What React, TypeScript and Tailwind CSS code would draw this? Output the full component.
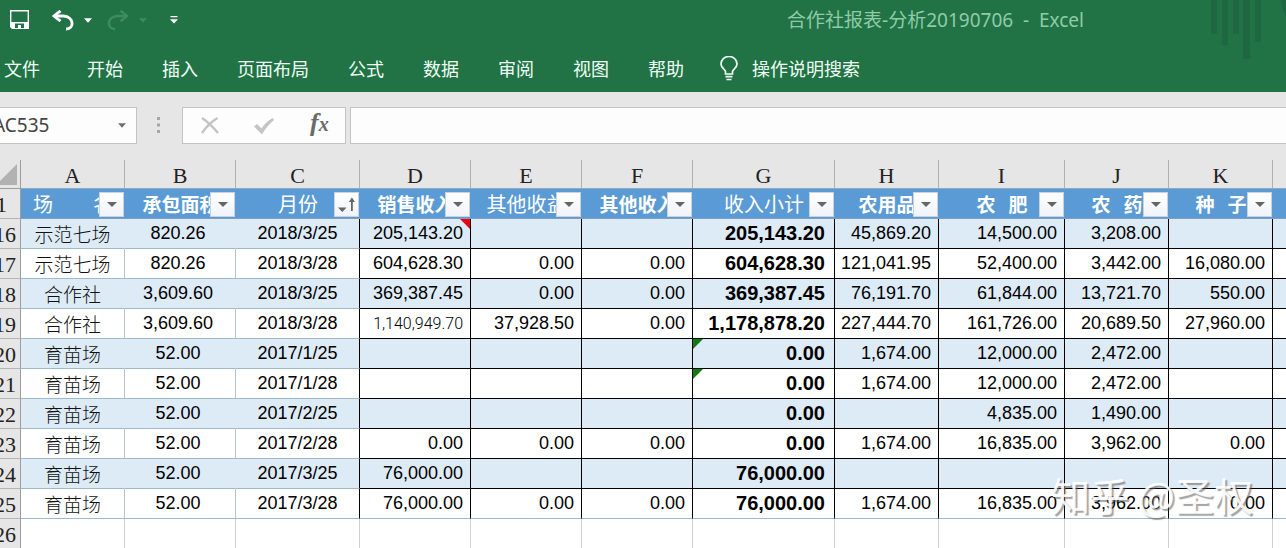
/**
 * App.tsx
 *
 * Excel window: title bar, ribbon tabs, formula bar and the cooperative report sheet.
 */

import React from 'react'
import clsx from 'clsx'

type Filter = 'caret' | 'sorted'

interface Column {
    letter: string
    title: string
    width: string
    bold?: boolean
    filter?: Filter
}

interface Row {
    no: string
    cells: string[]
}

const TABS = ['开始', '插入', '页面布局', '公式', '数据', '审阅', '视图', '帮助']

const COLUMNS: Column[] = [
    { letter: 'A', title: '场　　名', width: 'w-[104px]' },
    { letter: 'B', title: '承包面积', width: 'w-[111px]', bold: true },
    { letter: 'C', title: '月份', width: 'w-[124px]', filter: 'sorted' },
    { letter: 'D', title: '销售收入', width: 'w-[111px]', bold: true },
    { letter: 'E', title: '其他收益', width: 'w-[111px]' },
    { letter: 'F', title: '其他收入', width: 'w-[111px]', bold: true },
    { letter: 'G', title: '收入小计', width: 'w-[142px]' },
    { letter: 'H', title: '农用品', width: 'w-[104px]', bold: true },
    { letter: 'I', title: '农   肥', width: 'w-[126px]', bold: true },
    { letter: 'J', title: '农   药', width: 'w-[104px]', bold: true },
    { letter: 'K', title: '种   子', width: 'w-[104px]', bold: true },
]

const ROWS: Row[] = [
    { no: '16', cells: ['示范七场', '820.26', '2018/3/25', '205,143.20', '', '', '205,143.20', '45,869.20', '14,500.00', '3,208.00', ''] },
    { no: '17', cells: ['示范七场', '820.26', '2018/3/28', '604,628.30', '0.00', '0.00', '604,628.30', '121,041.95', '52,400.00', '3,442.00', '16,080.00'] },
    { no: '18', cells: ['合作社', '3,609.60', '2018/3/25', '369,387.45', '0.00', '0.00', '369,387.45', '76,191.70', '61,844.00', '13,721.70', '550.00'] },
    { no: '19', cells: ['合作社', '3,609.60', '2018/3/28', '1,140,949.70', '37,928.50', '0.00', '1,178,878.20', '227,444.70', '161,726.00', '20,689.50', '27,960.00'] },
    { no: '20', cells: ['育苗场', '52.00', '2017/1/25', '', '', '', '0.00', '1,674.00', '12,000.00', '2,472.00', ''] },
    { no: '21', cells: ['育苗场', '52.00', '2017/1/28', '', '', '', '0.00', '1,674.00', '12,000.00', '2,472.00', ''] },
    { no: '22', cells: ['育苗场', '52.00', '2017/2/25', '', '', '', '0.00', '', '4,835.00', '1,490.00', ''] },
    { no: '23', cells: ['育苗场', '52.00', '2017/2/28', '0.00', '0.00', '0.00', '0.00', '1,674.00', '16,835.00', '3,962.00', '0.00'] },
    { no: '24', cells: ['育苗场', '52.00', '2017/3/25', '76,000.00', '', '', '76,000.00', '', '', '', ''] },
    { no: '25', cells: ['育苗场', '52.00', '2017/3/28', '76,000.00', '0.00', '0.00', '76,000.00', '1,674.00', '16,835.00', '3,962.00', '0.00'] },
]

// cell marks, keyed by column letter + row number
const COMMENTS = ['D16']
const WARNINGS = ['G20', 'G21']

function Caret({ className }: { className?: string }) {
    return (
        <svg width="8" height="5" viewBox="0 0 8 5" fill="currentColor" className={className}>
            <path d="M0 0.3h8L4 4.7z" />
        </svg>
    )
}

function TitleBar() {
    return (
        <header className="relative bg-[#217346] text-white">
            {/* Dark stripes in the corner */}
            <svg className="absolute right-0 top-0" width="76" height="60" viewBox="0 0 76 60" fill="#1e6740">
                <path d="M1 0h6v34h-6zM12 0h6v45h-6zM23 0h6v34h-6zM33 0h7v59h-7zM45 0h6v42h-6zM71 0h5v17c-2-4-4-10-5-17z" />
            </svg>

            <div className="flex h-[40px] items-center pl-[10px]">
                <button aria-label="保存">
                    <svg width="20" height="20" viewBox="0 0 20 20" fill="currentColor">
                        <path d="M0 0h19v19H2L0 17zM1.400 1.400v10.600h16.200V1.400z" fillRule="evenodd" />
                        <path d="M5 13.500h9V18h-3v-3H8v3H5z" fill="#217346" />
                    </svg>
                </button>
                <button aria-label="撤消" className="ml-[22px]">
                    <svg width="22" height="21" viewBox="0 0 22 21" fill="none" stroke="currentColor" strokeWidth="2.800">
                        <path d="M2 6h9.500c10.500 0.500 11.500 13 2.500 13" />
                        <path d="M8.500 0.800L2 6l6.500 5.200" />
                    </svg>
                </button>
                <button aria-label="撤消选项" className="ml-[10px]"><Caret /></button>
                <button aria-label="恢复" className="ml-[15px] text-[#3f8a60]">
                    <svg width="22" height="21" viewBox="0 0 22 21" fill="none" stroke="currentColor" strokeWidth="2.400">
                        <path d="M20 6h-9.500c-10.500 0.500-11.500 13-2.500 13" />
                        <path d="M13.500 0.800L20 6l-6.500 5.200" />
                    </svg>
                </button>
                <button aria-label="恢复选项" className="ml-[10px] text-[#3f8a60]"><Caret /></button>
                <button aria-label="自定义快速访问工具栏" className="ml-[23px]">
                    <svg width="8" height="8" viewBox="0 0 8 8" fill="currentColor">
                        <path d="M0.500 0h7v1.300h-7zM0 3.200h8L4 7.600z" />
                    </svg>
                </button>
                <h1 className="flex-1 whitespace-pre pr-[202px] text-right text-[19px] leading-[24px] text-[#90cba7]">
                    {'合作社报表-分析20190706  -  Excel'}
                </h1>
            </div>

            <nav className="flex h-[52px] items-center whitespace-nowrap pl-[4px] pt-[5px] text-[18px] leading-[24px] text-[#effff5]">
                <button className="mr-[47px]">文件</button>
                <div className="flex gap-[39px]">
                    {TABS.map((tab) => <button key={tab}>{tab}</button>)}
                </div>
                <button className="ml-[36px] flex items-center gap-[14px]">
                    <svg width="18" height="25" viewBox="0 0 18 25" fill="none" stroke="currentColor" strokeWidth="1.700">
                        <path d="M5.500 18v-2.500C5 13 1 12 1 8a8 7.500 0 0 1 16 0c0 4-4 5-4.500 7.500V18z" />
                        <path d="M5.500 20.700h7M6.500 23.500h5" />
                    </svg>
                    操作说明搜索
                </button>
            </nav>
        </header>
    )
}

function FormulaBar() {
    return (
        <div className="flex h-[68px] pt-[15px]">
            <div className="-ml-[8px] flex h-[37px] w-[145px] items-center border border-[#c3c3c3] bg-[#fdfdfd] pr-[10px]">
                <input
                    aria-label="名称框"
                    defaultValue="AC535"
                    className="w-0 flex-1 bg-transparent text-[19px] text-[#444444] outline-none"
                />
                <button aria-label="名称列表" className="text-[#6f6f6f]"><Caret /></button>
            </div>
            <svg className="mx-[19px] mt-[10px]" width="7" height="16" viewBox="0 0 7 16" fill="#a5a5a5">
                <path d="M1 0h3v3H1zM1 6.500h3v3H1zM1 13h3v3H1z" />
            </svg>
            <div className="flex h-[37px] w-[164px] items-center border border-[#c3c3c3] bg-[#fdfdfd] pl-[18px] text-[#c4c4c4]">
                <button aria-label="取消">
                    <svg width="18" height="17" viewBox="0 0 18 17" fill="none" stroke="currentColor" strokeWidth="2.400">
                        <path d="M1 1c6 4 11 9 16 15M16.500 1C10 5 5 10 1 16" />
                    </svg>
                </button>
                <button aria-label="输入" className="ml-[35px]">
                    <svg width="21" height="18" viewBox="0 0 21 18" fill="currentColor">
                        <path d="M0 9.500l3-2.500 4.500 4.500C10 7.500 14 3.500 18.500 1l1.500 2C15 7 11 12 8 17.500z" />
                    </svg>
                </button>
                <button
                    aria-label="插入函数"
                    className="ml-[35px] pb-[4px] font-['Liberation_Serif',serif] text-[26px] font-bold italic leading-[28px] text-[#6a6a6a]"
                >
                    f<span className="text-[20px]">x</span>
                </button>
            </div>
            <input
                aria-label="编辑栏"
                className="ml-[4px] h-[37px] w-0 flex-1 border-y border-l border-[#c3c3c3] bg-[#fdfdfd] px-2 text-[18px] outline-none"
            />
        </div>
    )
}

function FilterButton({ column }: { column: Column }) {
    return (
        <button
            aria-label={`筛选 ${column.title}`}
            className="absolute bottom-[1px] right-[1px] flex h-[25px] w-[25px] items-center justify-center border border-[#c9d3df] bg-linear-to-b from-white to-[#f0f3f9] text-[#666666]"
        >
            {column.filter === 'sorted' ? (
                <svg width="19" height="16" viewBox="0 0 19 16" fill="currentColor">
                    <path d="M1 10.500h8.500l-4.200 4.500zM14 3h1.800v11H14zM14.900 0.500L18 5h-6.200z" />
                </svg>
            ) : (
                <svg width="10" height="5" viewBox="0 0 10 5" fill="currentColor">
                    <path d="M0 0h10L5 5z" />
                </svg>
            )}
        </button>
    )
}

function RowNumber({ children }: { children: React.ReactNode }) {
    return (
        <th
            scope="row"
            className="h-[30px] overflow-hidden border-b border-r border-b-[#b5b5b5] border-r-[#9d9d9d] bg-[#e6e6e6] p-0 font-['Liberation_Serif',serif] text-[22px] font-normal leading-[29px] text-[#222222]"
        >
            <div className="flex justify-end pr-[4px] pt-[3px] leading-[26px]">{children}</div>
        </th>
    )
}

function DataCell({ row, index, shaded, last }: { row: Row, index: number, shaded: boolean, last: boolean }) {
    const letter = COLUMNS[index].letter
    const key = letter + row.no
    const label = index < 3

    return (
        <td
            className={clsx(
                'relative h-[30px] border-b border-r p-0 leading-[29px]',
                label || last ? 'border-b-[#9fb9cd]' : 'border-b-black',
                index >= 2 && 'border-r-black',
                index < 2 && (shaded ? 'border-r-[#ddebf7]' : 'border-r-[#b4c6d6]'),
                label ? 'text-center' : 'pr-[7px] text-right',
                index === 0 && "font-['Noto_Sans_CJK_SC',sans-serif] text-[19px] font-light text-[#111111]",
                index === 1 && 'pr-[4px]',
                index > 0 && "font-['Liberation_Sans',sans-serif] text-black",
                index > 0 && (letter === 'G' ? 'pr-[9px] text-[20px] font-bold' : key === 'D19' ? '' : 'text-[18px]'),
            )}
        >
            {key === 'D19'
                ? <span className="font-['Roboto',sans-serif] text-[16px] font-light">{row.cells[index]}</span>
                : row.cells[index]}
            {COMMENTS.includes(key) && (
                <svg className="absolute right-0 top-0" width="10" height="10" viewBox="0 0 10 10">
                    <path d="M0 0h10v10z" fill="#e8000f" />
                </svg>
            )}
            {WARNINGS.includes(key) && (
                <svg className="absolute left-0 top-0" width="10" height="10" viewBox="0 0 10 10">
                    <path d="M0 0h10L0 10z" fill="#107c10" />
                </svg>
            )}
        </td>
    )
}

function Sheet() {
    return (
        <table className="w-full table-fixed border-separate border-spacing-0 whitespace-pre bg-white">
            <colgroup>
                <col className="w-[21px]" />
                {COLUMNS.map((c) => <col key={c.letter} className={c.width} />)}
                <col />
            </colgroup>
            <thead>
                <tr className="bg-[#e6e6e6]">
                    <td className="h-[29px] border-b border-r border-[#9d9d9d] p-0">
                        <svg className="ml-auto mr-[3px] block" width="17" height="21" viewBox="0 0 17 21" fill="#b2b2b2">
                            <path d="M17 0v21H0v-4z" />
                        </svg>
                    </td>
                    {COLUMNS.map((c) => (
                        <th
                            key={c.letter}
                            scope="col"
                            className="h-[29px] border-b border-r border-b-[#8fa9c2] border-r-[#b0b0b0] p-0 pt-[3px] font-['Liberation_Serif',serif] text-[22px] font-normal leading-[25px] text-[#222222]"
                        >
                            {c.letter}
                        </th>
                    ))}
                    <td className="border-b border-[#8fa9c2]" />
                </tr>
                <tr className="bg-[#5b9bd5]">
                    <RowNumber><span className="pr-[9px]">1</span></RowNumber>
                    {COLUMNS.map((c) => (
                        <th
                            key={c.letter}
                            className={clsx(
                                "relative h-[30px] border-b border-[#7f9fc0] p-0 text-center font-['Noto_Sans_CJK_SC',sans-serif] leading-[29px] text-white",
                                c.bold ? 'text-[19px] font-bold' : 'text-[20px] font-normal',
                            )}
                        >
                            <div className="flex justify-center overflow-hidden">{c.title}</div>
                            <FilterButton column={c} />
                        </th>
                    ))}
                    <td className="border-b border-[#7f9fc0]" />
                </tr>
            </thead>
            <tbody>
                {ROWS.map((row, i) => {
                    const shaded = i % 2 === 0
                    const last = i === ROWS.length - 1
                    return (
                        <tr key={row.no} className={shaded ? 'bg-[#ddebf7]' : 'bg-white'}>
                            <RowNumber>{row.no}</RowNumber>
                            {COLUMNS.map((c, index) => (
                                <DataCell key={c.letter} row={row} index={index} shaded={shaded} last={last} />
                            ))}
                            <td className={clsx('border-b', last ? 'border-[#9fb9cd]' : 'border-black')} />
                        </tr>
                    )
                })}
                <tr>
                    <RowNumber>26</RowNumber>
                    {COLUMNS.map((c) => <td key={c.letter} className="border-r border-[#d0d0d0]" />)}
                    <td />
                </tr>
            </tbody>
        </table>
    )
}

export default function App() {
    return (
        <div className="relative h-screen overflow-hidden bg-[#e6e6e6] font-['Noto_Sans','Noto_Sans_CJK_SC',sans-serif]">
            <TitleBar />
            <FormulaBar />
            <Sheet />

            {/* Watermark over the sheet */}
            <div className="pointer-events-none absolute bottom-[28px] right-[33px] whitespace-pre font-['Noto_Sans_CJK_SC',sans-serif] text-[39px] leading-[52px] text-white/90 [text-shadow:2px_2px_1px_rgba(90,90,90,0.55)]">
                知乎 @圣权
            </div>
        </div>
    )
}
